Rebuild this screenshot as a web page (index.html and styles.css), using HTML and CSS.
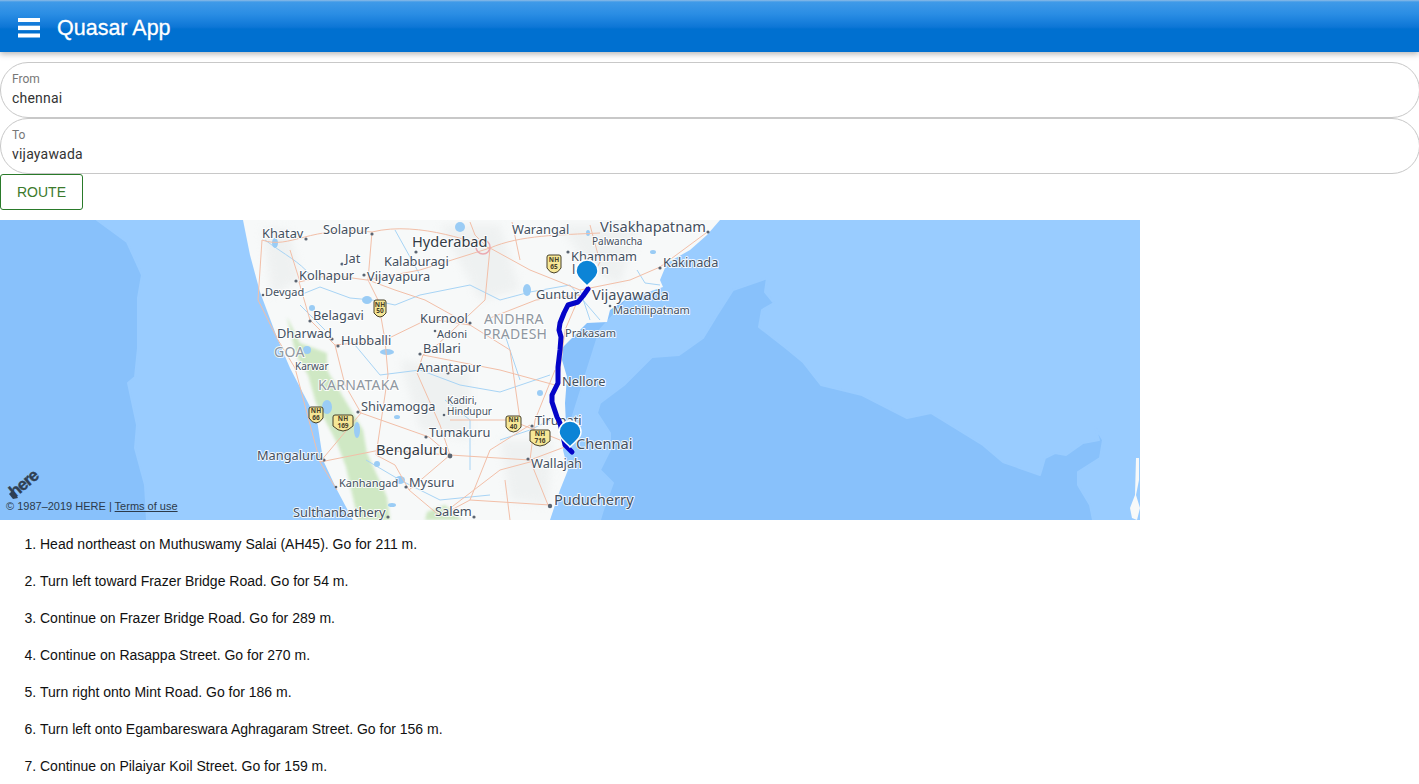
FILE: index.html
```html
<!DOCTYPE html>
<html lang="en">
<head>
<meta charset="utf-8">
<title>Quasar App</title>
<link rel="stylesheet" href="styles.css">
</head>
<body>
<header class="toolbar">
  <svg class="menu-icon" viewBox="0 0 22 20" aria-hidden="true"><rect x="0" y="0" width="22" height="4"/><rect x="0" y="7.700" width="22" height="4.400"/><rect x="0" y="15.500" width="22" height="4"/></svg>
  <div class="toolbar-title">Quasar App</div>
</header>
<main class="page">
  <form class="route-form">
    <label class="field"><span class="field-label">From</span><span class="field-value">chennai</span></label>
    <label class="field"><span class="field-label">To</span><span class="field-value">vijayawada</span></label>
    <button type="button" class="route-btn">Route</button>
  </form>
  <section class="map">
    <svg class="map-svg" viewBox="0 220 1140 300" aria-label="Map">
      <rect class="sea-deep" x="0" y="220" width="1140" height="300"/>
      <path class="sea-light" d="M97 220L127 242L142 275L138 298L138 348L135 377L128 383L137 425L135 448L145 485L147 520H355L243 220Z"/>
      <path class="sea-light" d="M700 220H1140V520H1093L1090 505L1078 485L1078 472L1100 458L1103 440L1095 427L1099 440L1083 443L1066 455L1055 453L1045 458L1040 475L1003 462L983 445L931 413L907 418L862 395L821 385L803 362L786 348L759 327L762 310L774 303L765 292L767 278L762 280L733 290L717 315L703 338L679 355L652 357L624 385L600 403L597 413L610 433L610 450L600 470L613 483L603 510L600 520H540L600 330Z"/>
      <path class="land" d="M243 220L250 255L260 292L278 340L290 368L317 420L323 460L337 490L353 520H550L560 490L568 470L563 450L566 425L565 403L567 377L562 360L563 347L587 323L607 322L610 310L625 300L663 287L660 280L667 263L690 250L707 235L720 220Z"/>
      <path class="land" d="M1136 458L1139 458L1139 480L1136 495L1140 508L1137 520L1132 518L1130 508L1135 495Z"/>
      <path class="terrain" d="M262 228L290 230L300 280L272 295ZM440 225L500 225L520 290L480 300ZM560 225L640 225L620 285L590 270ZM500 440L552 440L548 505L510 500ZM400 360L470 370L470 440L420 430Z"/>
      <path class="forest" d="M287 317L300 343L327 353L327 370L345 400L363 430L367 453L387 497L390 520H358L346 467L337 443L316 403L308 375L296 355Z"/>
      <path class="forest" d="M427 512L445 505L462 520H425Z"/>
      <g class="rivers">
        <path d="M300 295L320 287L350 298L372 300L395 305L420 295L470 285L500 300L530 292L570 285L600 320"/>
        <path d="M355 345L380 375L420 370L460 385L500 392L550 375"/>
        <path d="M366 460L400 480L440 500L490 495"/>
        <path d="M500 440L530 430L550 420"/>
        <path d="M395 230L420 275M580 290L590 320M637 270L645 283L660 285"/>
        <path d="M265 240C285 255 300 262 310 275M445 400L470 420L470 470M300 305L325 330M505 335L520 380"/>
      </g>
      <g class="lakes">
        <ellipse cx="367" cy="300" rx="5" ry="4"/>
        <ellipse cx="312" cy="308" rx="3" ry="3"/>
        <ellipse cx="387" cy="352" rx="7" ry="3"/>
        <ellipse cx="307" cy="350" rx="4" ry="4"/>
        <ellipse cx="327" cy="407" rx="5" ry="7"/>
        <ellipse cx="357" cy="430" rx="3" ry="8"/>
        <ellipse cx="397" cy="417" rx="3" ry="2"/>
        <ellipse cx="377" cy="464" rx="3" ry="3"/>
        <ellipse cx="400" cy="480" rx="5" ry="4"/>
        <ellipse cx="392" cy="505" rx="4" ry="2"/>
        <ellipse cx="527" cy="290" rx="4" ry="6"/>
        <ellipse cx="588" cy="233" rx="2" ry="3"/>
        <ellipse cx="653" cy="252" rx="3" ry="2"/>
        <ellipse cx="540" cy="393" rx="3" ry="3"/>
        <ellipse cx="460" cy="227" rx="5" ry="5"/>
        <ellipse cx="275" cy="243" rx="3" ry="5"/>
      </g>
      <g class="roads">
        <path d="M262 240C290 250 310 225 372 232C420 220 480 245 490 248C520 235 560 235 600 233"/>
        <path d="M372 232L368 280L378 300L385 340L388 375L376 455"/>
        <path d="M299 282L330 275L367 280L420 270L490 248"/>
        <path d="M299 282L310 320L335 345L385 340L420 323L437 320"/>
        <path d="M490 248L530 270L580 290L630 280L660 267L706 233"/>
        <path d="M490 248L485 300L437 345L423 355L417 373L440 425L450 455"/>
        <path d="M580 295L536 300L485 320"/>
        <path d="M335 345L345 385L361 413L429 437L450 455"/>
        <path d="M361 413L320 462L380 450L450 455"/>
        <path d="M450 455L530 460L570 445"/>
        <path d="M450 455L409 490L440 516L470 500L550 505"/>
        <path d="M450 420L510 420L560 440"/>
        <path d="M555 370L535 420L530 460L548 505"/>
        <path d="M440 516L500 470L530 462"/>
        <path d="M262 240L258 300L278 340L295 368L320 462L337 490"/>
        <path d="M580 295L565 330L558 385"/>
        <path d="M423 355L500 370L555 385"/>
        <path d="M490 250L475 235L470 222M590 225L600 262L585 290M512 222L520 260"/>
        <path d="M368 280L395 290L425 300L470 325M290 250L300 282M437 320L470 325L510 350L520 420"/>
        <path d="M409 490L395 465L376 455M470 500L490 450L530 425M505 480L510 520"/>
      </g>
      <path class="city-ring" d="M483 247m-7 0a7 7 0 1 0 14 0a7 7 0 1 0-14 0"/>
      <g class="dots">
        <circle cx="306" cy="239" r="1.600"/><circle cx="372" cy="234" r="1.600"/><circle cx="342" cy="264" r="1.600"/><circle cx="364" cy="275" r="1.600"/><circle cx="296" cy="281" r="1.600"/><circle cx="263" cy="295" r="1.300"/><circle cx="310" cy="321" r="1.600"/><circle cx="332" cy="339" r="1.600"/><circle cx="338" cy="346" r="1.600"/><circle cx="416" cy="252" r="1.600"/><circle cx="470" cy="323" r="1.600"/><circle cx="435" cy="331" r="1.300"/><circle cx="420" cy="354" r="1.600"/><circle cx="448" cy="373" r="1.600"/><circle cx="358" cy="412" r="1.600"/><circle cx="444" cy="415" r="1.300"/><circle cx="426" cy="437" r="1.600"/><circle cx="450" cy="456" r="2.400"/><circle cx="324" cy="460" r="1.600"/><circle cx="336" cy="487" r="1.300"/><circle cx="406" cy="487" r="1.600"/><circle cx="388" cy="517" r="1.600"/><circle cx="474" cy="517" r="1.600"/><circle cx="568" cy="252" r="1.600"/><circle cx="660" cy="268" r="1.600"/><circle cx="708" cy="232" r="1.600"/><circle cx="610" cy="306" r="1.300"/><circle cx="532" cy="426" r="1.600"/><circle cx="528" cy="459" r="1.600"/><circle cx="550" cy="506" r="2.200"/>
      </g>
      <g class="shields">
        <path d="M374 302Q374 300 376 300H384Q386 300 386 302V313Q383 317 380 317Q377 317 374 313Z"/>
        <path d="M547 257Q547 255 549 255H559Q561 255 561 257V268Q558 273 554 273Q550 273 547 268Z"/>
        <path d="M309 409Q309 407 311 407H321Q323 407 323 409V418Q320 423 316 423Q312 423 309 418Z"/>
        <path d="M333 417Q333 415 335 415H351Q353 415 353 417V426Q348 431 343 431Q338 431 333 426Z"/>
        <path d="M506 418Q506 416 508 416H519Q521 416 521 418V427Q518 432 513.500 432Q509 432 506 427Z"/>
        <path d="M530 432Q530 430 532 430H548Q550 430 550 432V441Q545 446 540 446Q535 446 530 441Z"/>
      </g>
      <g class="shield-text">
        <text x="380" y="306.500">NH</text><text x="380" y="313">50</text>
        <text x="554" y="262">NH</text><text x="554" y="268.500">65</text>
        <text x="316" y="413">NH</text><text x="316" y="419.500">66</text>
        <text x="343" y="421">NH</text><text x="343" y="427.500">169</text>
        <text x="513.500" y="422">NH</text><text x="513.500" y="428.500">40</text>
        <text x="540" y="436">NH</text><text x="540" y="442.500">716</text>
      </g>
      <g class="labels">
        <text class="s13" x="262" y="238">Khatav</text>
        <text class="s13" x="323" y="234">Solapur</text>
        <text class="s16" x="412" y="247">Hyderabad</text>
        <text class="s13" x="512" y="234">Warangal</text>
        <text class="s15" x="600" y="232">Visakhapatnam</text>
        <text class="s10" x="592" y="245">Palwancha</text>
        <text class="s13" x="571" y="261">Khammam</text>
        <text class="s13" x="572" y="274">l</text>
        <text class="s13" x="601" y="274">n</text>
        <text class="s13" x="345" y="263">Jat</text>
        <text class="s13" x="384" y="266">Kalaburagi</text>
        <text class="s13" x="299" y="280">Kolhapur</text>
        <text class="s13" x="367" y="281">Vijayapura</text>
        <text class="s11" x="265" y="296">Devgad</text>
        <text class="s13" x="663" y="267">Kakinada</text>
        <text class="s13" x="536" y="299">Guntur</text>
        <text class="s15" x="592" y="300">Vijayawada</text>
        <text class="s11" x="613" y="314">Machilipatnam</text>
        <text class="s13" x="313" y="320">Belagavi</text>
        <text class="s13" x="420" y="323">Kurnool</text>
        <text class="s11" x="437" y="338">Adoni</text>
        <text class="region" x="484" y="324">ANDHRA</text>
        <text class="region" x="483" y="339">PRADESH</text>
        <text class="s11" x="565" y="337">Prakasam</text>
        <text class="s13" x="277" y="338">Dharwad</text>
        <text class="s13" x="341" y="345">Hubballi</text>
        <text class="s13" x="423" y="353">Ballari</text>
        <text class="region" x="274" y="357">GOA</text>
        <text class="s10" x="295" y="370">Karwar</text>
        <text class="s13" x="417" y="372">Anantapur</text>
        <text class="region" x="318" y="390">KARNATAKA</text>
        <text class="s13" x="562" y="386">Nellore</text>
        <text class="s13" x="361" y="411">Shivamogga</text>
        <text class="s10" x="447" y="404">Kadiri,</text>
        <text class="s10" x="447" y="415">Hindupur</text>
        <text class="s13" x="535" y="425">Tirupati</text>
        <text class="s13" x="429" y="437">Tumakuru</text>
        <text class="s16" x="376" y="455">Bengaluru</text>
        <text class="s13" x="257" y="460">Mangaluru</text>
        <text class="s13" x="531" y="468">Wallajah</text>
        <text class="s11" x="339" y="487">Kanhangad</text>
        <text class="s13" x="409" y="487">Mysuru</text>
        <text class="s13" x="293" y="517">Sulthanbathery</text>
        <text class="s13" x="435" y="516">Salem</text>
        <text class="s15" x="554" y="505">Puducherry</text>
      </g>
      <path class="route-line" d="M588 289L583 296L578 302L568 305L564 313L560 323L559 330L561 337L560 350L558 367L558 383L552 395L552 402L557 417L560 423L565 445L572 452"/>
      <text class="labels s15 chennai" x="576" y="449">Chennai</text>
      <path class="pin" d="M587 286C583 281 576 278 576 271A11 11 0 1 1 598 271C598 278 591 281 587 286Z"/>
      <path class="pin" d="M570 447C566 442 559 439 559 432A11 11 0 1 1 581 432C581 439 574 442 570 447Z"/>
      <text class="here-logo" transform="translate(15 498) rotate(-40)">here</text>
      <path class="here-mark" d="M9 494L13 490L18 498L13 499Z"/>
    </svg>
    <div class="copyright">© 1987–2019 HERE | <a class="terms">Terms of use</a></div>
  </section>
  <ol class="steps">
    <li>Head northeast on Muthuswamy Salai (AH45). Go for 211 m.</li>
    <li>Turn left toward Frazer Bridge Road. Go for 54 m.</li>
    <li>Continue on Frazer Bridge Road. Go for 289 m.</li>
    <li>Continue on Rasappa Street. Go for 270 m.</li>
    <li>Turn right onto Mint Road. Go for 186 m.</li>
    <li>Turn left onto Egambareswara Aghragaram Street. Go for 156 m.</li>
    <li>Continue on Pilaiyar Koil Street. Go for 159 m.</li>
  </ol>
</main>
</body>
</html>
```
FILE: styles.css
```css
* { box-sizing: border-box; }
html, body { margin: 0; padding: 0; background: #fff; overflow: hidden; }
body { font-family: "Liberation Sans", Arial, sans-serif; font-size: 14px; color: #111; }

.toolbar {
  height: 52px;
  display: flex;
  align-items: center;
  gap: 17px;
  padding: 4px 0 0 18px;
  background: linear-gradient(#8fbce6 0, #3f9ae8 2px, #2a8de4 14px, #0d76d6 27px, #0070d0 29px, #0070d0 100%);
  box-shadow: 0 2px 6px rgba(0, 0, 0, .3);
  color: #fff;
}
.menu-icon { width: 22px; height: 20px; fill: #fff; flex: none; }
.toolbar-title { font-size: 21.500px; font-weight: 400; -webkit-text-stroke: .3px #fff; }

.route-form { padding-top: 10px; display: flex; flex-direction: column; align-items: stretch; }
.field {
  height: 56px;
  margin-right: -1px;
  border: 1px solid #c8c8c8;
  border-radius: 28px;
  padding: 9px 11px 0;
  display: flex;
  flex-direction: column;
  font-family: Roboto, sans-serif;
}
.field-label { font-size: 12px; line-height: 15px; color: #777; }
.field-value { font-size: 14px; line-height: 22px; color: #333; letter-spacing: .2px; }
.route-btn {
  align-self: flex-start;
  width: 83px;
  height: 36px;
  background: #fff;
  border: 1px solid #2a7a2a;
  border-radius: 3px;
  color: #3c7a2c;
  font: 400 14px "Liberation Sans", sans-serif;
  text-transform: uppercase;
  padding: 0;
}

.map { position: relative; width: 1140px; height: 300px; margin-top: 10px; overflow: hidden; }
.map-svg { display: block; width: 1140px; height: 300px; }
.sea-deep { fill: #88c1fb; }
.sea-light { fill: #99ccff; stroke: #99ccff; stroke-width: 2; stroke-linejoin: round; }
.land { fill: #f7f9f9; }
.forest { fill: #cfe8c4; filter: blur(1.500px); }
.terrain { fill: #e9ecec; opacity: .6; filter: blur(4px); }
.roads path { fill: none; stroke: #f2bfa8; stroke-width: 1; }
.rivers path { fill: none; stroke: #a8d4f5; stroke-width: 1; }
.lakes ellipse { fill: #9accf5; }
.city-ring { fill: none; stroke: #eba9b0; stroke-width: 1.500; }
.dots circle { fill: #5b6572; }
.shields path { fill: #f6e796; stroke: #46402a; stroke-width: 1; }
.shield-text text { font: 700 6.500px "Noto Sans", sans-serif; fill: #46402a; text-anchor: middle; }
.labels text, .chennai {
  font-family: "Noto Sans", sans-serif;
  fill: #44505f;
  paint-order: stroke;
  stroke: rgba(255, 255, 255, .85);
  stroke-width: 2px;
  stroke-linejoin: round;
}
.s10 { font-size: 10px; }
.s11 { font-size: 11px; }
.s13 { font-size: 12.800px; }
.s15 { font-size: 14.600px; }
.s16 { font-size: 14.600px; }
.labels .s16 { fill: #333b45; }
.labels .region { font-size: 14px; fill: #8f97a0; letter-spacing: .3px; }
.route-line { fill: none; stroke: #0404c8; stroke-width: 5; stroke-linejoin: round; stroke-linecap: round; }
.pin { fill: #0c84d6; stroke: #fff; stroke-width: 1.500; }
.here-logo { font: 700 17px "Liberation Sans", sans-serif; fill: #2f3f52; stroke: #2f3f52; stroke-width: .4px; letter-spacing: -1px; }
.here-mark { fill: #2f3f52; }
.copyright { position: absolute; left: 6px; bottom: 7px; font-size: 11px; line-height: 13px; color: #2c3a4a; }
.terms { text-decoration: underline; }

.steps { margin: 14px 0 0; padding: 0 0 0 40px; }
.steps li { line-height: 21px; margin-bottom: 16px; }
.steps li:last-child { margin-bottom: 0; }
```
